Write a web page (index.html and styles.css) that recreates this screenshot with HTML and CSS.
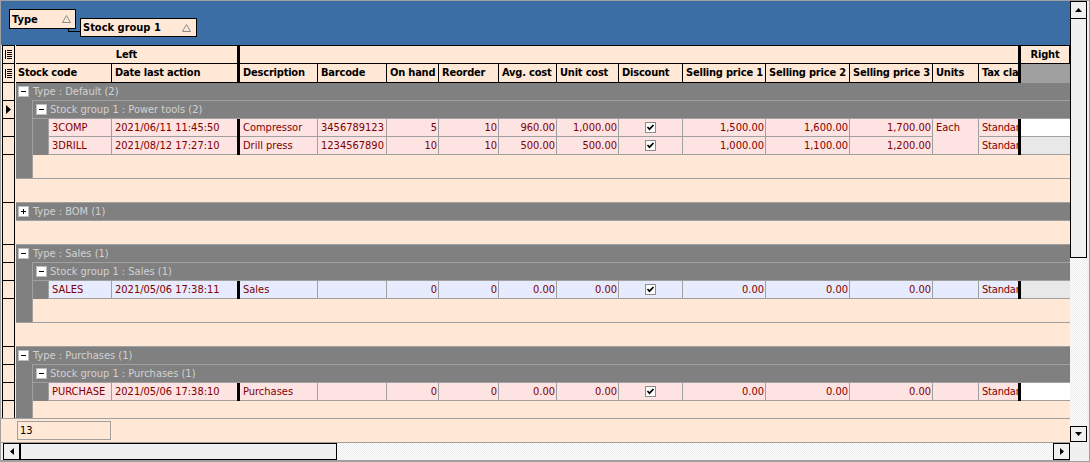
FILE: index.html
```html
<!DOCTYPE html>
<html>
<head>
<meta charset="utf-8">
<title>Stock grid</title>
<link rel="stylesheet" href="styles.css">
</head>
<body>
<div class="frame">
  <div class="main">
    <div class="grouppanel">
      <div class="chip chip-type"><span>Type</span><svg class="tri" width="9" height="8" viewBox="0 0 9 8"><polygon points="0.5,7.5 4.5,0.5 8.5,7.5" fill="none" stroke="#8a8a8a"/></svg></div>
      <div class="chip chip-sg"><span>Stock group 1</span><svg class="tri" width="9" height="8" viewBox="0 0 9 8"><polygon points="0.5,7.5 4.5,0.5 8.5,7.5" fill="none" stroke="#8a8a8a"/></svg></div>
    </div>

    <div class="mid">
      <div class="ind">
        <div class="ind-col">
          <div class="ir h18"><svg width="8" height="9" viewBox="0 0 8 9"><rect x="0" y="0" width="1" height="9"/><rect x="2" y="0" width="5" height="1"/><rect x="2" y="2" width="5" height="1"/><rect x="2" y="4" width="5" height="1"/><rect x="2" y="6" width="5" height="1"/><rect x="2" y="8" width="5" height="1"/></svg></div>
          <div class="ir h19"><svg width="8" height="9" viewBox="0 0 8 9"><rect x="0" y="0" width="1" height="9"/><rect x="2" y="0" width="5" height="1"/><rect x="2" y="2" width="5" height="1"/><rect x="2" y="4" width="5" height="1"/><rect x="2" y="6" width="5" height="1"/><rect x="2" y="8" width="5" height="1"/></svg></div>
          <div class="ir h18"></div>
          <div class="ir h18"><svg width="5" height="9" viewBox="0 0 5 9"><polygon points="0,0 5,4.5 0,9"/></svg></div>
          <div class="ir h18"></div>
          <div class="ir h18"></div>
          <div class="ir h48"></div>
          <div class="ir h42"></div>
          <div class="ir h18"></div>
          <div class="ir h18"></div>
          <div class="ir h18"></div>
          <div class="ir h48"></div>
          <div class="ir h18"></div>
          <div class="ir h18"></div>
          <div class="ir h18"></div>
          <div class="ir h48"></div>
        </div>
      </div>

      <div class="tbl">
        <div class="hrow hrow1">
          <div class="hc w-left center">Left</div>
          <div class="split"></div>
          <div class="hc w-mid"></div>
          <div class="split"></div>
          <div class="hc w-right center br">Right</div>
        </div>
        <div class="hrow hrow2">
          <div class="hc w-code first br">Stock code</div>
          <div class="hc w-date">Date last action</div>
          <div class="split"></div>
          <div class="hc w-desc br">Description</div>
          <div class="hc w-bar br">Barcode</div>
          <div class="hc w-oh br">On hand</div>
          <div class="hc w-re br">Reorder</div>
          <div class="hc w-avg br">Avg. cost</div>
          <div class="hc w-uc br">Unit cost</div>
          <div class="hc w-disc br">Discount</div>
          <div class="hc w-sp1 br">Selling price 1</div>
          <div class="hc w-sp2 br">Selling price 2</div>
          <div class="hc w-sp3 br">Selling price 3</div>
          <div class="hc w-un br">Units</div>
          <div class="hc w-tax">Tax class</div>
          <div class="split"></div>
          <div class="hgray w-right"></div>
        </div>

        <div class="body">
          <!-- Type : Default -->
          <div class="grp">
            <div class="g1"><svg class="xb" width="11" height="11" viewBox="0 0 11 11"><rect x="0.5" y="0.5" width="10" height="10" fill="#fff" stroke="#bdbdbd"/><rect x="3" y="5" width="5" height="1" fill="#000"/></svg><span>Type : Default (2)</span></div>
            <div class="gbody">
              <div class="gind"></div>
              <div class="gcontent">
                <div class="g2"><svg class="xb" width="11" height="11" viewBox="0 0 11 11"><rect x="0.5" y="0.5" width="10" height="10" fill="#fff" stroke="#bdbdbd"/><rect x="3" y="5" width="5" height="1" fill="#000"/></svg><span>Stock group 1 : Power tools (2)</span></div>
                <div class="sbody">
                  <div class="sind"></div>
                  <div class="rows">
                    <div class="drow pink">
                      <div class="dc w-dcode">3COMP</div>
                      <div class="dc w-date nbr">2021/06/11 11:45:50</div>
                      <div class="split"></div>
                      <div class="dc w-desc">Compressor</div>
                      <div class="dc w-bar">3456789123</div>
                      <div class="dc w-oh num">5</div>
                      <div class="dc w-re num">10</div>
                      <div class="dc w-avg num">960.00</div>
                      <div class="dc w-uc num">1,000.00</div>
                      <div class="dc w-disc chk"><svg width="11" height="11" viewBox="0 0 11 11"><rect x="0.5" y="0.5" width="10" height="10" fill="#fff" stroke="#8c8c8c"/><path d="M2.5 5 L4.5 7.2 L8.5 3" fill="none" stroke="#000" stroke-width="1.7"/></svg></div>
                      <div class="dc w-sp1 num">1,500.00</div>
                      <div class="dc w-sp2 num">1,600.00</div>
                      <div class="dc w-sp3 num">1,700.00</div>
                      <div class="dc w-un nobb">Each</div>
                      <div class="dc w-tax nbr">Standard</div>
                      <div class="split"></div>
                      <div class="dc w-right nbr rwhite"></div>
                    </div>
                    <div class="drow pink">
                      <div class="dc w-dcode">3DRILL</div>
                      <div class="dc w-date nbr">2021/08/12 17:27:10</div>
                      <div class="split"></div>
                      <div class="dc w-desc">Drill press</div>
                      <div class="dc w-bar">1234567890</div>
                      <div class="dc w-oh num">10</div>
                      <div class="dc w-re num">10</div>
                      <div class="dc w-avg num">500.00</div>
                      <div class="dc w-uc num">500.00</div>
                      <div class="dc w-disc chk"><svg width="11" height="11" viewBox="0 0 11 11"><rect x="0.5" y="0.5" width="10" height="10" fill="#fff" stroke="#8c8c8c"/><path d="M2.5 5 L4.5 7.2 L8.5 3" fill="none" stroke="#000" stroke-width="1.7"/></svg></div>
                      <div class="dc w-sp1 num">1,000.00</div>
                      <div class="dc w-sp2 num">1,100.00</div>
                      <div class="dc w-sp3 num">1,200.00</div>
                      <div class="dc w-un"></div>
                      <div class="dc w-tax nbr">Standard</div>
                      <div class="split"></div>
                      <div class="dc w-right nbr rgrey"></div>
                    </div>
                  </div>
                </div>
                <div class="subfoot"></div>
              </div>
            </div>
            <div class="gfoot"></div>
          </div>

          <!-- Type : BOM -->
          <div class="grp">
            <div class="g1"><svg class="xb" width="11" height="11" viewBox="0 0 11 11"><rect x="0.5" y="0.5" width="10" height="10" fill="#fff" stroke="#bdbdbd"/><rect x="3" y="5" width="5" height="1" fill="#000"/><rect x="5" y="3" width="1" height="5" fill="#000"/></svg><span>Type : BOM (1)</span></div>
            <div class="gfoot"></div>
          </div>

          <!-- Type : Sales -->
          <div class="grp">
            <div class="g1"><svg class="xb" width="11" height="11" viewBox="0 0 11 11"><rect x="0.5" y="0.5" width="10" height="10" fill="#fff" stroke="#bdbdbd"/><rect x="3" y="5" width="5" height="1" fill="#000"/></svg><span>Type : Sales (1)</span></div>
            <div class="gbody">
              <div class="gind"></div>
              <div class="gcontent">
                <div class="g2"><svg class="xb" width="11" height="11" viewBox="0 0 11 11"><rect x="0.5" y="0.5" width="10" height="10" fill="#fff" stroke="#bdbdbd"/><rect x="3" y="5" width="5" height="1" fill="#000"/></svg><span>Stock group 1 : Sales (1)</span></div>
                <div class="sbody">
                  <div class="sind"></div>
                  <div class="rows">
                    <div class="drow blue">
                      <div class="dc w-dcode">SALES</div>
                      <div class="dc w-date nbr">2021/05/06 17:38:11</div>
                      <div class="split"></div>
                      <div class="dc w-desc">Sales</div>
                      <div class="dc w-bar"></div>
                      <div class="dc w-oh num">0</div>
                      <div class="dc w-re num">0</div>
                      <div class="dc w-avg num">0.00</div>
                      <div class="dc w-uc num">0.00</div>
                      <div class="dc w-disc chk"><svg width="11" height="11" viewBox="0 0 11 11"><rect x="0.5" y="0.5" width="10" height="10" fill="#fff" stroke="#8c8c8c"/><path d="M2.5 5 L4.5 7.2 L8.5 3" fill="none" stroke="#000" stroke-width="1.7"/></svg></div>
                      <div class="dc w-sp1 num">0.00</div>
                      <div class="dc w-sp2 num">0.00</div>
                      <div class="dc w-sp3 num">0.00</div>
                      <div class="dc w-un"></div>
                      <div class="dc w-tax nbr">Standard</div>
                      <div class="split"></div>
                      <div class="dc w-right nbr rgrey"></div>
                    </div>
                  </div>
                </div>
                <div class="subfoot"></div>
              </div>
            </div>
            <div class="gfoot"></div>
          </div>

          <!-- Type : Purchases -->
          <div class="grp">
            <div class="g1"><svg class="xb" width="11" height="11" viewBox="0 0 11 11"><rect x="0.5" y="0.5" width="10" height="10" fill="#fff" stroke="#bdbdbd"/><rect x="3" y="5" width="5" height="1" fill="#000"/></svg><span>Type : Purchases (1)</span></div>
            <div class="gbody">
              <div class="gind"></div>
              <div class="gcontent">
                <div class="g2"><svg class="xb" width="11" height="11" viewBox="0 0 11 11"><rect x="0.5" y="0.5" width="10" height="10" fill="#fff" stroke="#bdbdbd"/><rect x="3" y="5" width="5" height="1" fill="#000"/></svg><span>Stock group 1 : Purchases (1)</span></div>
                <div class="sbody">
                  <div class="sind"></div>
                  <div class="rows">
                    <div class="drow pink">
                      <div class="dc w-dcode">PURCHASE</div>
                      <div class="dc w-date nbr">2021/05/06 17:38:10</div>
                      <div class="split"></div>
                      <div class="dc w-desc">Purchases</div>
                      <div class="dc w-bar"></div>
                      <div class="dc w-oh num">0</div>
                      <div class="dc w-re num">0</div>
                      <div class="dc w-avg num">0.00</div>
                      <div class="dc w-uc num">0.00</div>
                      <div class="dc w-disc chk"><svg width="11" height="11" viewBox="0 0 11 11"><rect x="0.5" y="0.5" width="10" height="10" fill="#fff" stroke="#8c8c8c"/><path d="M2.5 5 L4.5 7.2 L8.5 3" fill="none" stroke="#000" stroke-width="1.7"/></svg></div>
                      <div class="dc w-sp1 num">0.00</div>
                      <div class="dc w-sp2 num">0.00</div>
                      <div class="dc w-sp3 num">0.00</div>
                      <div class="dc w-un"></div>
                      <div class="dc w-tax nbr">Standard</div>
                      <div class="split"></div>
                      <div class="dc w-right nbr rwhite"></div>
                    </div>
                  </div>
                </div>
                <div class="subfoot"></div>
              </div>
            </div>
            <div class="gfoot"></div>
          </div>
        </div>
      </div>
    </div>

    <div class="foot"><div class="count">13</div></div>
  </div>

  <div class="vscroll">
    <div class="sbtn up"><svg width="7" height="4" viewBox="0 0 7 4"><polygon points="0,4 3.5,0 7,4"/></svg></div>
    <div class="vthumb"></div>
    <div class="vtrack"></div>
    <div class="sbtn down"><svg width="7" height="4" viewBox="0 0 7 4"><polygon points="0,0 7,0 3.5,4"/></svg></div>
  </div>

  <div class="hscroll">
    <div class="hbtn"><svg width="4" height="7" viewBox="0 0 4 7"><polygon points="4,0 0,3.5 4,7"/></svg></div>
    <div class="hthumb"></div>
    <div class="htrack"></div>
    <div class="hbtn"><svg width="4" height="7" viewBox="0 0 4 7"><polygon points="0,0 4,3.5 0,7"/></svg></div>
  </div>
  <div class="corner"></div>
</div>
</body>
</html>
```

FILE: styles.css
```css
* { box-sizing: border-box; }

html, body {
  margin: 0;
  padding: 0;
  background: #ffffff;
}

body {
  font-family: "DejaVu Sans Condensed", "DejaVu Sans", sans-serif;
  font-stretch: condensed;
  font-size: 11px;
  color: #000;
}

.frame {
  width: 1090px;
  height: 462px;
  border: 1px solid #a0a0a0;
  display: grid;
  grid-template-columns: 1069px 19px;
  grid-template-rows: 441px 19px;
  background: #f0f0f0;
}

.main {
  display: flex;
  flex-direction: column;
  overflow: hidden;
  background: #ffe8d6;
}

/* ---- group-by panel ---- */
.grouppanel {
  flex: none;
  height: 44px;
  background: #3a6ea5;
  display: flex;
  align-items: flex-start;
  gap: 4px;
  padding: 8px 0 0 8px;
}

.chip {
  position: relative;
  display: flex;
  align-items: center;
  justify-content: space-between;
  background: #ffe8d6;
  border: 1px solid #000;
  font-weight: bold;
  padding: 0 4px 0 2px;
  white-space: nowrap;
}

.chip-type { width: 67px; height: 20px; }
.chip-sg { width: 117px; height: 19px; margin-top: 9px; padding-right: 5px; }

.chip-sg::before {
  content: "";
  position: absolute;
  left: -13px;
  top: 9px;
  width: 11px;
  height: 3px;
  border-left: 1px solid #000;
  border-bottom: 1px solid #000;
}

/* ---- middle: indicator + table ---- */
.mid {
  flex: none;
  height: 373px;
  display: flex;
  overflow: hidden;
}

.ind {
  flex: none;
  width: 15px;
  padding: 0 1px;
}

.ind-col {
  height: 100%;
  border-top: 1px solid #000;
  border-left: 1px solid #000;
  border-right: 1px solid #000;
  overflow: hidden;
}

.ir {
  border-bottom: 1px solid #000;
  display: flex;
  align-items: center;
  justify-content: center;
}

.ir svg { fill: #000; }

.h18 { height: 18px; }
.h19 { height: 19px; }
.h42 { height: 42px; }
.h48 { height: 48px; }

.tbl {
  flex: none;
  width: 1054px;
  display: flex;
  flex-direction: column;
  overflow: hidden;
}

.hrow {
  flex: none;
  display: flex;
  font-weight: bold;
  height: 19px;
  letter-spacing: -0.2px;
}

.hrow1 {
  border-top: 1px solid #000;
  border-bottom: 1px solid #000;
}

.hc {
  flex: none;
  height: 100%;
  padding: 0 0 0 3px;
  line-height: 17px;
  overflow: hidden;
  white-space: nowrap;
}

.hrow2 .hc {
  border-bottom: 1px solid #000;
  line-height: 18px;
}

.hc.first { padding-left: 2px; }
.hc.br { border-right: 1px solid #000; }
.hc.center { text-align: center; padding: 0; }

.hgray {
  flex: none;
  height: 100%;
  background: #a0a0a0;
}

.split {
  flex: none;
  width: 3px;
  align-self: stretch;
  background: #000;
}

/* widths */
.w-left { width: 221px; }
.w-mid { width: 778px; }
.w-right { width: 49px; }
.w-code { width: 96px; }
.w-dcode { width: 63px; }
.w-date { width: 125px; }
.w-desc { width: 78px; }
.w-bar { width: 69px; }
.w-oh { width: 52px; }
.w-re { width: 60px; }
.w-avg { width: 58px; }
.w-uc { width: 62px; }
.w-disc { width: 64px; }
.w-sp1 { width: 83px; }
.w-sp2 { width: 84px; }
.w-sp3 { width: 83px; }
.w-un { width: 46px; }
.w-tax { width: 39px; }

/* ---- body ---- */
.body {
  flex: 1;
  overflow: hidden;
}

.g1, .g2 {
  display: flex;
  align-items: center;
  background: #808080;
  color: #d2d2d2;
  white-space: nowrap;
}

.g1 {
  height: 17px;
  padding-left: 2px;
  gap: 4px;
}

.g2 {
  height: 18px;
  border-bottom: 1px solid #a0a0a0;
  padding-left: 3px;
  gap: 3px;
}

.xb { flex: none; }

.gbody { display: flex; }

.gind {
  flex: none;
  width: 16px;
  background: #808080;
}

.gcontent {
  flex: none;
  width: 1038px;
  border-left: 1px solid #a0a0a0;
  border-top: 1px solid #a0a0a0;
}

.sbody { display: flex; }

.sind {
  flex: none;
  width: 15px;
  background: #808080;
}

.rows {
  flex: none;
  width: 1022px;
  border-left: 1px solid #a0a0a0;
}

.drow {
  display: flex;
  height: 18px;
  color: #800000;
}

.pink { background: #fde3e2; }
.blue { background: #e6ebfd; }

.dc {
  flex: none;
  height: 18px;
  border-right: 1px solid #a0a0a0;
  border-bottom: 1px solid #a0a0a0;
  padding: 0 3px;
  line-height: 17px;
  overflow: hidden;
  white-space: nowrap;
}

.dc.num { text-align: right; padding: 0 1px 0 0; }
.dc.nbr { border-right: none; }
.dc.nobb { border-bottom-color: transparent; }

.dc.chk {
  display: flex;
  align-items: center;
  justify-content: center;
  padding: 0;
}

.w-tax.dc { letter-spacing: -0.2px; }

.rwhite { background: #ffffff; }
.rgrey { background: #e8e8e8; }

.subfoot { height: 23px; }

.gfoot {
  height: 25px;
  border-top: 1px solid #a0a0a0;
  border-bottom: 1px solid #a0a0a0;
}

/* ---- footer ---- */
.foot {
  flex: none;
  height: 24px;
  border-top: 1px solid #a0a0a0;
  padding: 2px 0 0 16px;
}

.count {
  width: 94px;
  height: 19px;
  border: 1px solid #a0a0a0;
  padding-left: 2px;
  line-height: 17px;
}

/* ---- scrollbars ---- */
.vscroll {
  display: flex;
  flex-direction: column;
  background: #f0f0f0;
}

.sbtn, .hbtn {
  flex: none;
  border: 1px solid #000;
  background: #f0f0f0;
  display: flex;
  align-items: center;
  justify-content: center;
}

.sbtn svg, .hbtn svg { fill: #000; }

.sbtn { width: 17px; }
.sbtn.up { height: 18px; }
.sbtn.down { height: 16px; }

.vthumb {
  flex: none;
  width: 17px;
  height: 239px;
  border: 1px solid #000;
  border-top: none;
  background: #f0f0f0;
}

.vtrack {
  flex: 1;
  width: 17px;
  background: repeating-conic-gradient(#ffffff 0% 25%, #ebebeb 0% 50%) 0 0 / 2px 2px;
}

.hscroll {
  display: flex;
  border-top: 1px solid #a0a0a0;
  border-bottom: 1px solid #a0a0a0;
  padding-left: 2px;
  background: #f0f0f0;
}

.hbtn { width: 17px; height: 17px; }

.hthumb {
  flex: none;
  width: 317px;
  height: 17px;
  border: 1px solid #000;
  background: #f0f0f0;
}

.htrack {
  flex: 1;
  background: repeating-conic-gradient(#ffffff 0% 25%, #ebebeb 0% 50%) 0 0 / 2px 2px;
}

.corner { background: #f0f0f0; }
```
